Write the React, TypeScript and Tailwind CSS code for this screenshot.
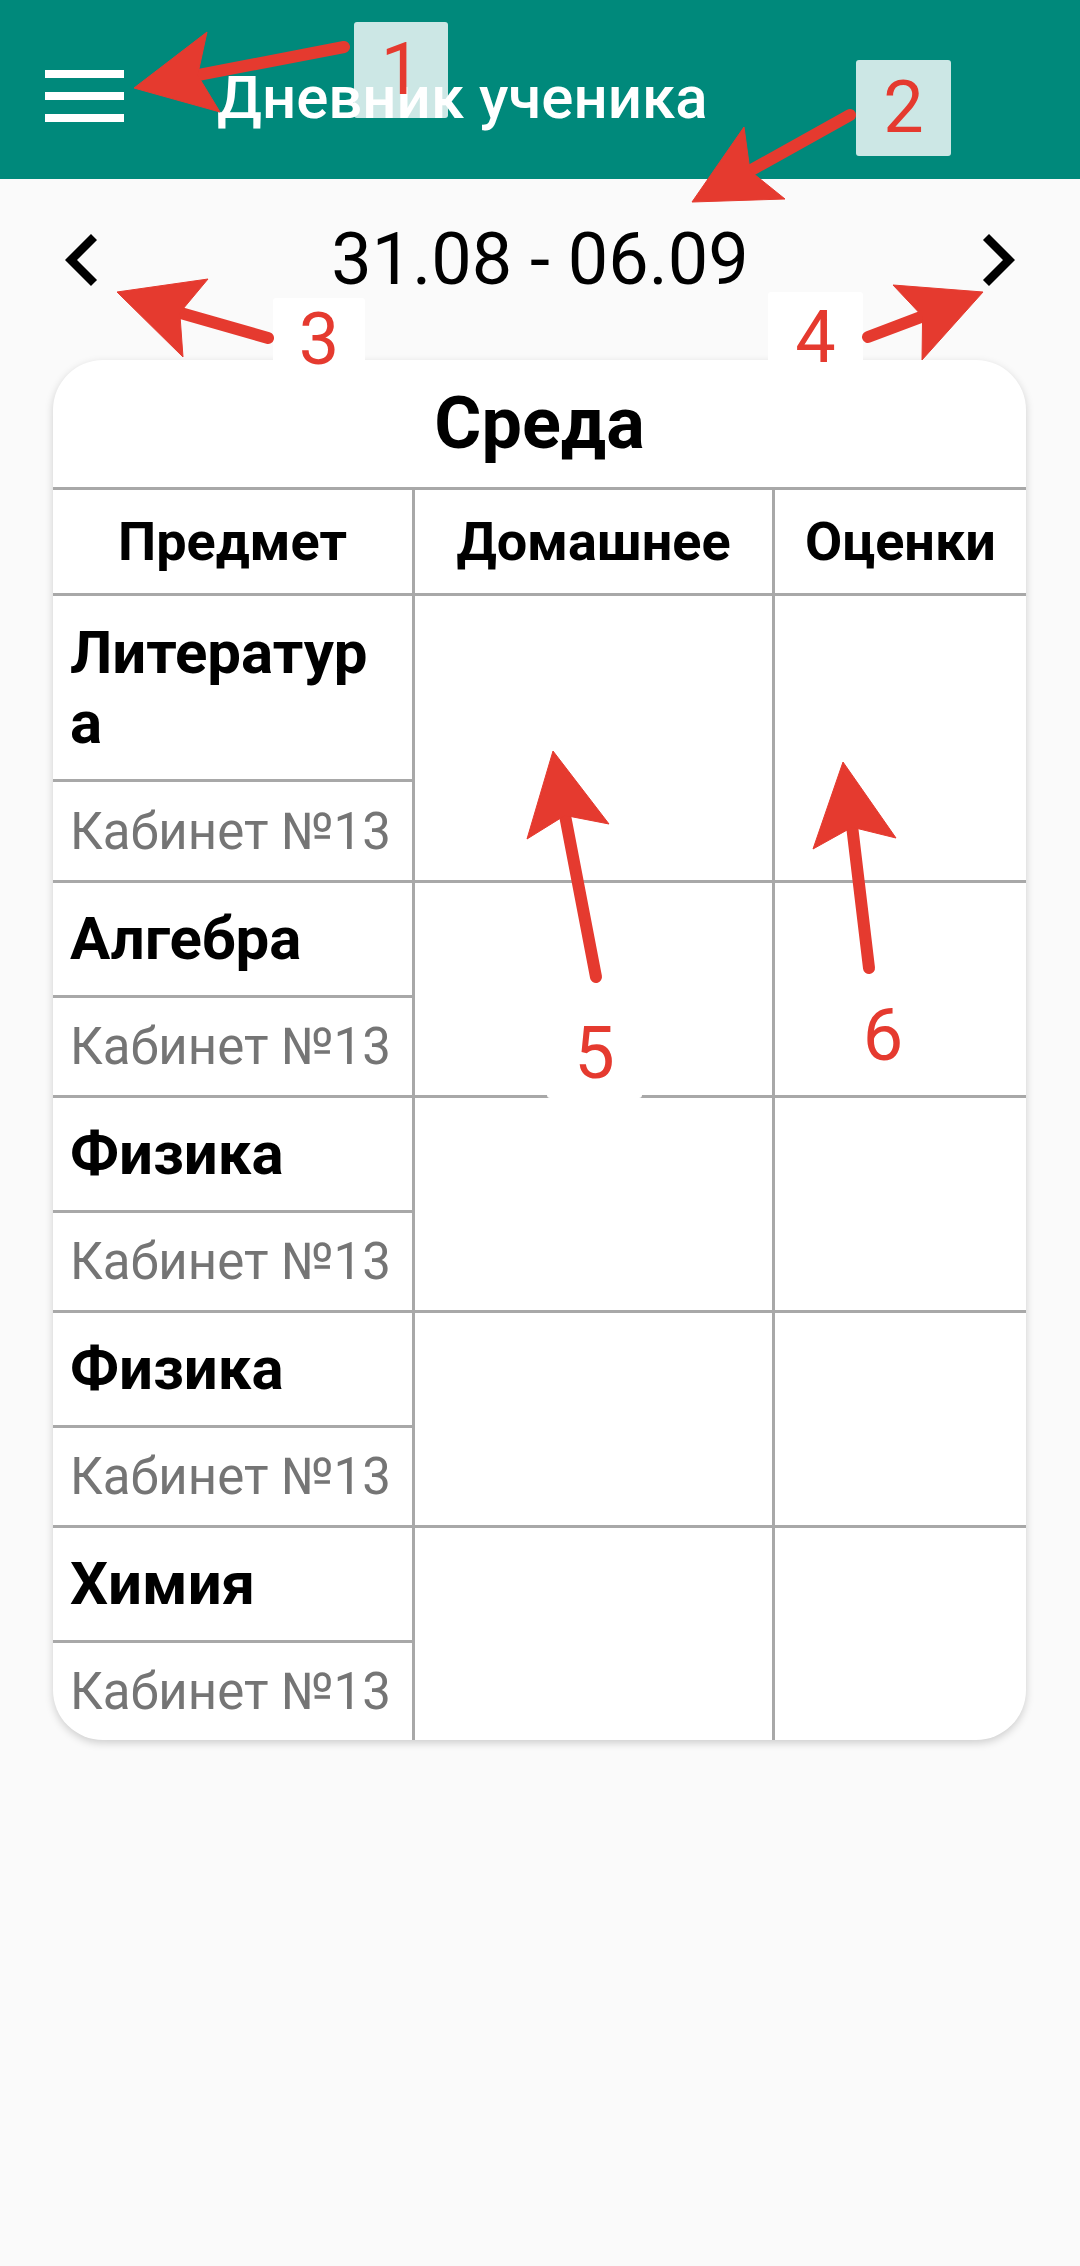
import React from "react";

type Pt = [number, number];
type ArrowDef = { tail: Pt; tip: Pt; a: Pt; b: Pt };

const arrows: ArrowDef[] = [
  { tail: [344, 47], tip: [134, 88], a: [207, 32], b: [220, 112] },
  { tail: [850, 115], tip: [692, 202], a: [744, 127], b: [785, 199] },
  { tail: [268, 338], tip: [117, 292], a: [208, 279], b: [183, 357] },
  { tail: [868, 337], tip: [983, 292], a: [893, 285], b: [922, 360] },
  { tail: [596, 977], tip: [553, 751], a: [527, 839], b: [609, 824] },
  { tail: [869, 968], tip: [843, 762], a: [813, 849], b: [896, 838] },
];

const labels = [
  { n: "1", cls: "left-[354px] top-[22px] w-[94px] h-[96px] bg-white/80" },
  { n: "2", cls: "left-[856px] top-[60px] w-[95px] h-[96px] bg-white/80" },
  { n: "3", cls: "left-[273px] top-[298px] w-[92px] h-[84px] bg-white" },
  { n: "4", cls: "left-[768px] top-[292px] w-[95px] h-[92px] bg-white" },
  { n: "5", cls: "left-[547px] top-[1010px] w-[95px] h-[88px] bg-white" },
  { n: "6", cls: "left-[836px] top-[988px] w-[94px] h-[96px] bg-white" },
];

const lessons = [
  { name: "Литература", room: "Кабинет №13", tall: true },
  { name: "Алгебра", room: "Кабинет №13" },
  { name: "Физика", room: "Кабинет №13" },
  { name: "Физика", room: "Кабинет №13" },
  { name: "Химия", room: "Кабинет №13" },
];

function Arrow({ tail, tip, a, b }: ArrowDef) {
  const mid: Pt = [(a[0] + b[0]) / 2, (a[1] + b[1]) / 2];
  const notch: Pt = [tip[0] + (mid[0] - tip[0]) * 0.8, tip[1] + (mid[1] - tip[1]) * 0.8];
  return (
    <g fill="#E53A2F" stroke="#E53A2F">
      <line x1={tail[0]} y1={tail[1]} x2={notch[0]} y2={notch[1]} strokeWidth={12} strokeLinecap="round" />
      <polygon
        points={`${tip[0]},${tip[1]} ${a[0]},${a[1]} ${notch[0]},${notch[1]} ${b[0]},${b[1]}`}
        strokeWidth={1}
        strokeLinejoin="round"
      />
    </g>
  );
}

function Chevron({ right }: { right?: boolean }) {
  return (
    <svg width="33" height="52" viewBox="0 0 33 52" className={right ? "rotate-180" : ""}>
      <polyline points="29,3 6,26 29,49" fill="none" stroke="#000" strokeWidth="8.5" />
    </svg>
  );
}

export default function App() {
  return (
    <div className="relative min-h-screen bg-[#FAFAFA] font-['Roboto',sans-serif] text-black">
      <header className="flex h-[179px] items-center bg-[#00897B] pl-[45px] pt-[13px]">
        <svg width="79" height="52" viewBox="0 0 79 52">
          <rect x="0" y="0" width="79" height="8" fill="#fff" />
          <rect x="0" y="22" width="79" height="8" fill="#fff" />
          <rect x="0" y="44" width="79" height="8" fill="#fff" />
        </svg>
        <h1 className="ml-[93px] mt-[4px] text-[60px] font-medium leading-none text-white">Дневник ученика</h1>
      </header>

      <div className="flex h-[181px] items-center justify-between px-[65px] pb-[20px]">
        <Chevron />
        <span className="text-[72px] leading-none">31.08 - 06.09</span>
        <Chevron right />
      </div>

      <div className="ml-[53px] w-[973px] overflow-hidden rounded-[50px] bg-white shadow-[0_3px_8px_rgba(0,0,0,0.18)]">
        <div className="flex h-[127px] items-center justify-center text-[72px] font-bold leading-none">Среда</div>

        <div className="grid h-[106px] grid-cols-[359px_360px_1fr] border-t-[3px] border-[#A8A8A8] text-[54px] font-bold">
          <div className="flex items-center justify-center">Предмет</div>
          <div className="flex items-center justify-center border-l-[3px] border-[#A8A8A8]">Домашнее</div>
          <div className="flex items-center justify-center border-l-[3px] border-[#A8A8A8]">Оценки</div>
        </div>

        {lessons.map((l, i) => (
          <div key={i} className="grid grid-cols-[359px_360px_1fr] border-t-[3px] border-[#A8A8A8]">
            <div className="flex flex-col">
              <div
                className={`flex items-center break-all pl-[17px] pr-[24px] text-[60px] font-bold leading-[70px] ${
                  l.tall ? "h-[183px]" : "h-[112px]"
                }`}
              >
                {l.name}
              </div>
              <div
                className={`flex items-center border-t-[3px] border-[#A8A8A8] pl-[17px] text-[51px] leading-none text-[#757575] ${
                  l.tall ? "h-[101px]" : "h-[100px]"
                }`}
              >
                {l.room}
              </div>
            </div>
            <div className="border-l-[3px] border-[#A8A8A8]" />
            <div className="border-l-[3px] border-[#A8A8A8]" />
          </div>
        ))}
      </div>

      {labels.map((b) => (
        <div
          key={b.n}
          className={`absolute flex items-center justify-center rounded-[3px] text-[72px] leading-none text-[#E53A2F] ${b.cls}`}
        >
          {b.n}
        </div>
      ))}

      <svg className="pointer-events-none absolute left-0 top-0" width="1080" height="1100" viewBox="0 0 1080 1100">
        {arrows.map((a, i) => (
          <Arrow key={i} {...a} />
        ))}
      </svg>
    </div>
  );
}
